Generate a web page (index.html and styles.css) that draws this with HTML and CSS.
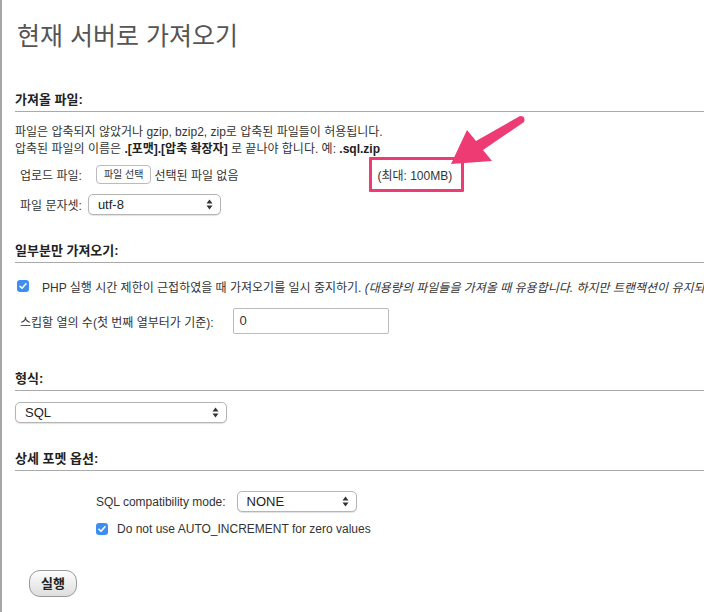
FILE: index.html
```html
<!DOCTYPE html>
<html>
<head>
  <title>현재 서버로 가져오기</title>
  <link rel="stylesheet" href="styles.css">
</head>
<body>
  <div class="page">
    <h2 class="title">현재 서버로 가져오기</h2>

    <div class="sec-head first">가져올 파일:</div>
    <p class="note">
      파일은 압축되지 않았거나 gzip, bzip2, zip로 압축된 파일들이 허용됩니다.<br>
      압축된 파일의 이름은 <b>.[포맷].[압축 확장자]</b> 로 끝나야 합니다. 예: <b>.sql.zip</b>
    </p>
    <div class="row upload">
      <span class="label">업로드 파일:</span>
      <span class="file-btn">파일 선택</span>
      <span>선택된 파일 없음</span>
      <span class="max">(최대: 100MB)</span>
    </div>
    <div class="row charset">
      <span class="label">파일 문자셋:</span>
      <span class="select sel-charset">utf-8
        <svg class="updown" width="7" height="11" viewBox="0 0 7 11"><path d="M3.5 0.5L6.5 4.5H0.5Z M3.5 10.5L6.5 6.5H0.5Z" fill="#333"/></svg>
      </span>
    </div>

    <div class="sec-head second">일부분만 가져오기:</div>
    <div class="row check-row">
      <span class="checkbox"><svg width="12" height="12" viewBox="0 0 12 12"><path d="M3 6.3L5 8.3L9 3.8" fill="none" stroke="#fff" stroke-width="1.6" stroke-linecap="round" stroke-linejoin="round"/></svg></span>
      <span class="check-text">PHP 실행 시간 제한이 근접하였을 때 가져오기를 일시 중지하기. <i>(대용량의 파일들을 가져올 때 유용합니다. 하지만 트랜잭션이 유지되지 않을 수 있습니다.)</i></span>
    </div>
    <div class="row skip">
      <span class="label">스킵할 열의 수(첫 번째 열부터가 기준):</span>
      <span class="text-input">0</span>
    </div>

    <div class="sec-head third">형식:</div>
    <div class="row format">
      <span class="select sel-format">SQL
        <svg class="updown" width="7" height="11" viewBox="0 0 7 11"><path d="M3.5 0.5L6.5 4.5H0.5Z M3.5 10.5L6.5 6.5H0.5Z" fill="#333"/></svg>
      </span>
    </div>

    <div class="sec-head fourth">상세 포멧 옵션:</div>
    <div class="options">
      <div class="row compat">
        <span class="label">SQL compatibility mode:</span>
        <span class="select sel-compat">NONE
          <svg class="updown" width="7" height="11" viewBox="0 0 7 11"><path d="M3.5 0.5L6.5 4.5H0.5Z M3.5 10.5L6.5 6.5H0.5Z" fill="#333"/></svg>
        </span>
      </div>
      <div class="row check-row small">
        <span class="checkbox"><svg width="12" height="12" viewBox="0 0 12 12"><path d="M3 6.3L5 8.3L9 3.8" fill="none" stroke="#fff" stroke-width="1.6" stroke-linecap="round" stroke-linejoin="round"/></svg></span>
        <span class="check-text">Do not use AUTO_INCREMENT for zero values</span>
      </div>
    </div>

    <div class="submit-row">
      <span class="go-btn">실행</span>
    </div>

    <!-- annotation arrow -->
    <svg class="arrow" width="90" height="60" viewBox="440 110 90 60">
      <path d="M451 164 L467 130 L476 141 L520 116 Q526 116 524 122 L483 150 L492 161 Z" fill="#ee3b74"/>
    </svg>
  </div>
</body>
</html>
```

FILE: styles.css
```css
body { margin: 0; font-family: "Liberation Sans", "Noto Sans CJK KR", sans-serif; font-size: 12px; color: #333; overflow: hidden; }
.page { position: relative; border-left: 2px solid #a6a6a6; min-height: 612px; padding-left: 13px; }
.title { margin: 0; padding-top: 20px; padding-left: 2px; font-size: 25px; line-height: 32px; font-weight: normal; color: #555; }

.sec-head { font-size: 13px; font-weight: bold; line-height: 18px; padding-bottom: 2px; border-bottom: 1px solid #aaa; color: #222; }
.sec-head.first { margin-top: 39px; }
.sec-head.second { margin-top: 26px; }
.sec-head.third { margin-top: 36px; }
.sec-head.fourth { margin-top: 27px; }

.note { margin: 12px 0 0; line-height: 17px; white-space: nowrap; }
.note b { color: #222; }

.row { display: flex; align-items: center; white-space: nowrap; }
.label { margin-right: 6px; }
.upload { margin-top: 4px; height: 24px; padding-left: 5px; }
.upload .label { margin-right: 14px; }
.file-btn { font-size: 10px; line-height: 17px; padding: 0 7px; border: 1px solid #bbb; border-radius: 4px; background: #fff; margin-right: 3px; }
.max { position: relative; margin-left: 139px; }
.max::after { content: ""; position: absolute; left: -8px; right: -12px; top: -9px; bottom: -9px; border: 3px solid #ee3b74; border-radius: 1px; }

.charset { margin-top: 6px; height: 24px; padding-left: 5px; }
.select { position: relative; display: inline-flex; align-items: center; height: 19px; padding-left: 9px; border: 1px solid #b5b5b5; border-radius: 5px; background: #fff; box-shadow: 0 1px 1px rgba(0,0,0,0.12); font-size: 13px; color: #222; box-sizing: border-box; }
.updown { position: absolute; right: 7px; top: 4px; }
.sel-charset { width: 133px; height: 21px; }
.sel-format { width: 212px; height: 21px; }
.sel-compat { width: 120px; height: 21px; }

.check-row { margin-top: 14px; height: 18px; padding-left: 2px; }
.checkbox { display: inline-flex; width: 12px; height: 12px; border-radius: 3px; background: #3d8ef0; margin-right: 13px; }
.check-text i { color: #333; }

.skip { margin-top: 13px; padding-left: 5px; }
.skip .label { margin-right: 19px; }
.text-input { display: inline-block; width: 156px; height: 26px; line-height: 24px; box-sizing: border-box; padding-left: 6px; border: 1px solid #bbb; border-radius: 2px; font-size: 13px; }

.format { margin-top: 11px; }

.options { padding-left: 81px; }
.compat { margin-top: 20px; }
.compat .label { margin-right: 11px; }
.options .check-row { margin-top: 8px; padding-left: 0; }
.options .checkbox { margin-right: 9px; }

.submit-row { margin-top: 32px; padding-left: 14px; }
.go-btn { display: inline-block; width: 48px; height: 27px; line-height: 25px; box-sizing: border-box; text-align: center; font-size: 13px; font-weight: bold; color: #222; border: 1px solid #999; border-radius: 11px; background: linear-gradient(#fdfdfd, #dedede); }

.arrow { position: absolute; left: 438px; top: 110px; }
```
